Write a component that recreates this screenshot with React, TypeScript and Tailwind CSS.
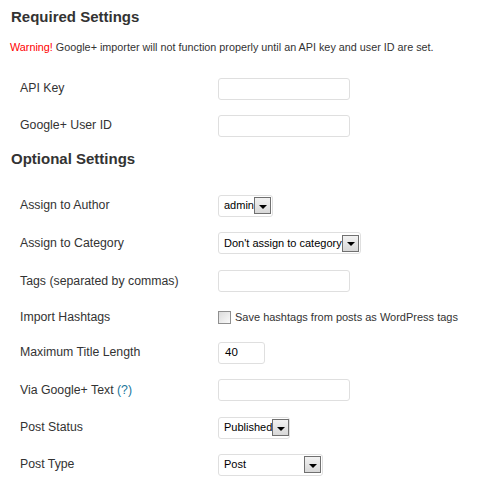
import React from 'react'

function TextBox({ width, value }: { width: string; value?: string }) {
  return (
    <div className={`${width} h-[22px] border border-[#dfdfdf] rounded-[3px] bg-white px-[6px] flex items-center text-[11.5px] text-black`}>
      {value}
    </div>
  )
}

function Select({ width, value }: { width: string; value: string }) {
  return (
    <div className={`${width} h-[22px] border border-[#dfdfdf] rounded-[3px] bg-white pl-[5px] pr-[1px] flex items-center justify-between text-[11px] text-black`}>
      <span className="whitespace-nowrap">{value}</span>
      <span className="w-[17px] h-[17px] border border-[#707070] bg-gradient-to-b from-[#f2f2f2] to-[#d8d8d8] flex items-center justify-center shrink-0">
        <span className="w-0 h-0 border-l-[4px] border-r-[4px] border-t-[4px] border-l-transparent border-r-transparent border-t-black mt-[2px]" />
      </span>
    </div>
  )
}

function Row({ label, height, children }: { label: React.ReactNode; height: string; children: React.ReactNode }) {
  return (
    <div className={`flex items-center ${height}`}>
      <div className="w-[208px] shrink-0 pl-[10px] text-[12.3px] text-[#333]">{label}</div>
      <div className="flex items-center">{children}</div>
    </div>
  )
}

export default function App() {
  return (
    <div className="w-[477px] h-[477px] bg-white px-[10px] overflow-hidden" style={{ fontFamily: '"Liberation Sans", Arial, sans-serif' }}>
      <h3 className="text-[15px] font-bold text-[#333] pt-[8px] pl-[1px] leading-[18px]">Required Settings</h3>
      <p className="text-[10.8px] text-[#333] mt-[14px] leading-[14px]">
        <span className="text-[#ff0000]">Warning!</span> Google+ importer will not function properly until an API key and user ID are set.
      </p>

      <div className="mt-[16px]">
        <Row label="API Key" height="h-[37px]">
          <TextBox width="w-[132px]" />
        </Row>
        <Row label="Google+ User ID" height="h-[37px]">
          <TextBox width="w-[132px]" />
        </Row>
      </div>

      <h3 className="text-[15px] font-bold text-[#333] mt-[6px] pl-[1px] leading-[18px]">Optional Settings</h3>

      <div className="mt-[19px]">
        <Row label="Assign to Author" height="h-[37px]">
          <Select width="w-[55px]" value="admin" />
        </Row>
        <Row label="Assign to Category" height="h-[38px]">
          <Select width="w-[143px]" value="Don't assign to category" />
        </Row>
        <Row label="Tags (separated by commas)" height="h-[38px]">
          <TextBox width="w-[132px]" />
        </Row>
        <Row label="Import Hashtags" height="h-[34px]">
          <label className="flex items-center gap-[4px] text-[11px] text-[#333] whitespace-nowrap">
            <span className="w-[13px] h-[13px] border border-[#8f8f8f] bg-gradient-to-br from-[#dcdcdc] to-[#fafafa] shrink-0" />
            Save hashtags from posts as WordPress tags
          </label>
        </Row>
        <Row label="Maximum Title Length" height="h-[37px]">
          <TextBox width="w-[47px]" value="40" />
        </Row>
        <Row label={<>Via Google+ Text <span className="text-[#21759b]">(?)</span></>} height="h-[38px]">
          <TextBox width="w-[132px]" />
        </Row>
        <Row label="Post Status" height="h-[37px]">
          <Select width="w-[72px]" value="Published" />
        </Row>
        <Row label="Post Type" height="h-[37px]">
          <Select width="w-[105px]" value="Post" />
        </Row>
      </div>
    </div>
  )
}
